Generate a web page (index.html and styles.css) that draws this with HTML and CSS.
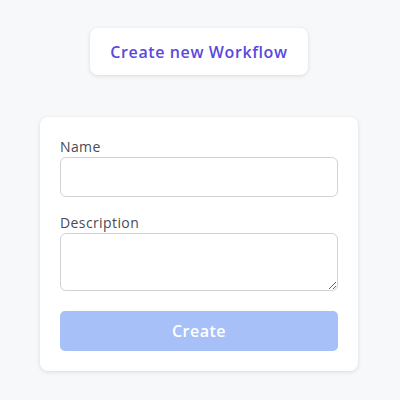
FILE: index.html
```html
<!DOCTYPE html>
<html>
<head>
<meta charset="utf-8">
<link rel="stylesheet" href="styles.css">
</head>
<body>
<div class="page">
  <button class="new-btn">Create new Workflow</button>
  <form class="card">
    <label class="field">
      <span class="label">Name</span>
      <input class="input" type="text">
    </label>
    <label class="field">
      <span class="label">Description</span>
      <textarea class="textarea"></textarea>
    </label>
    <button type="button" class="submit">Create</button>
  </form>
</div>
</body>
</html>
```
FILE: styles.css
```css
* { box-sizing: border-box; }
html, body { margin: 0; padding: 0; }
body {
  background: #f7f8fa;
  font-family: "Open Sans", "Noto Sans", sans-serif;
  width: 400px;
  height: 400px;
}
.page {
  width: 398px;
  display: flex;
  flex-direction: column;
  align-items: center;
  padding-top: 28px;
}
.new-btn {
  width: 218px;
  height: 47px;
  border: none;
  border-radius: 8px;
  background: #ffffff;
  box-shadow: 0 1px 4px rgba(0,0,0,0.12);
  color: #5a48e0;
  font-family: inherit;
  font-size: 16px;
  font-weight: 600;
  letter-spacing: 0.6px;
  padding: 0;
}
.card {
  margin-top: 42px;
  width: 318px;
  background: #fff;
  border-radius: 8px;
  box-shadow: 0 1px 4px rgba(0,0,0,0.12);
  padding: 20px;
  display: flex;
  flex-direction: column;
}
.field {
  display: flex;
  flex-direction: column;
  margin-bottom: 16px;
}
.label {
  font-size: 14px;
  line-height: 20px;
  color: #4a4a55;
  letter-spacing: 0.4px;
}
.input, .textarea {
  width: 278px;
  border: 1px solid #d2d2d8;
  border-radius: 6px;
  background: #fff;
  font-family: inherit;
  font-size: 14px;
}
.input { height: 40px; }
.textarea { height: 58px; resize: vertical; display: block; }
.submit {
  margin-top: 4px;
  width: 278px;
  height: 40px;
  border: none;
  border-radius: 5px;
  background: #a8c0f8;
  color: #fff;
  font-family: inherit;
  font-size: 16px;
  font-weight: 600;
  letter-spacing: 0.5px;
}
```
